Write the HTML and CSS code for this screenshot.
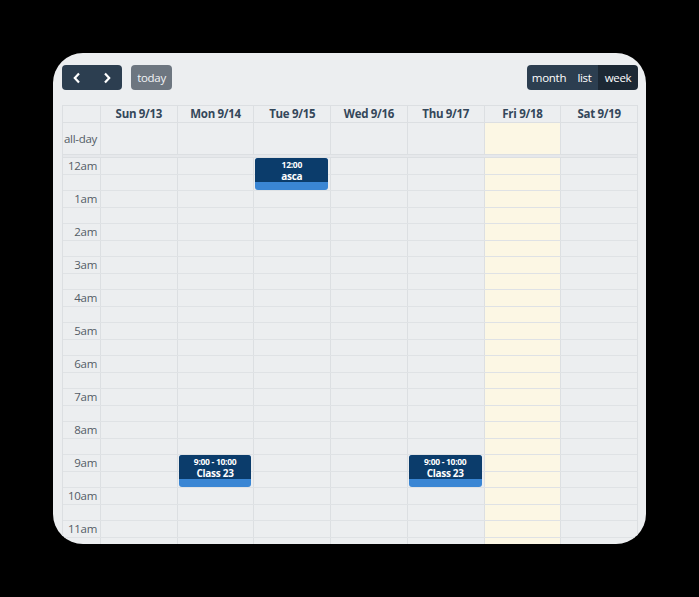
FILE: index.html
```html
<!DOCTYPE html>
<html>
<head>
<meta charset="utf-8">
<link rel="stylesheet" href="styles.css">
</head>
<body>
<div class="card">
  <div class="toolbar">
    <div class="tb-left">
      <div class="btn-group">
        <button class="btn nav"><svg width="10" height="12" viewBox="0 0 10 12"><path d="M7 1.5 L2.8 6 L7 10.5" fill="none" stroke="#fff" stroke-width="2.2"/></svg></button>
        <button class="btn nav"><svg width="10" height="12" viewBox="0 0 10 12"><path d="M3 1.5 L7.2 6 L3 10.5" fill="none" stroke="#fff" stroke-width="2.2"/></svg></button>
      </div>
      <button class="btn today">today</button>
    </div>
    <div class="btn-group">
      <button class="btn view">month</button><button class="btn view">list</button><button class="btn view active">week</button>
    </div>
  </div>

  <div class="cal">
    <div class="row7 head">
      <div class="axis"></div>
      <div class="hcell">Sun 9/13</div>
      <div class="hcell">Mon 9/14</div>
      <div class="hcell">Tue 9/15</div>
      <div class="hcell">Wed 9/16</div>
      <div class="hcell">Thu 9/17</div>
      <div class="hcell">Fri 9/18</div>
      <div class="hcell">Sat 9/19</div>
    </div>
    <div class="row7 allday">
      <div class="axis alabel">all-day</div>
      <div class="acell"></div>
      <div class="acell"></div>
      <div class="acell"></div>
      <div class="acell"></div>
      <div class="acell"></div>
      <div class="acell today-col"></div>
      <div class="acell"></div>
    </div>
    <div class="divider"></div>
    <div class="tbody">
      <div class="row7 layer bg">
        <div class="bcol"></div>
        <div class="bcol"></div>
        <div class="bcol"></div>
        <div class="bcol"></div>
        <div class="bcol"></div>
        <div class="bcol"></div>
        <div class="bcol today-col"></div>
        <div class="bcol"></div>
      </div>
      <div class="slots">
        <div class="slot"><span class="tl">12am</span></div><div class="slot minor"></div>
        <div class="slot"><span class="tl">1am</span></div><div class="slot minor"></div>
        <div class="slot"><span class="tl">2am</span></div><div class="slot minor"></div>
        <div class="slot"><span class="tl">3am</span></div><div class="slot minor"></div>
        <div class="slot"><span class="tl">4am</span></div><div class="slot minor"></div>
        <div class="slot"><span class="tl">5am</span></div><div class="slot minor"></div>
        <div class="slot"><span class="tl">6am</span></div><div class="slot minor"></div>
        <div class="slot"><span class="tl">7am</span></div><div class="slot minor"></div>
        <div class="slot"><span class="tl">8am</span></div><div class="slot minor"></div>
        <div class="slot"><span class="tl">9am</span></div><div class="slot minor"></div>
        <div class="slot"><span class="tl">10am</span></div><div class="slot minor"></div>
        <div class="slot"><span class="tl">11am</span></div><div class="slot minor"></div>
      </div>
      <div class="row7 layer evs">
        <div></div>
        <div class="ecol"></div>
        <div class="ecol">
          <div class="event at9"><div class="ev-main"><div class="ev-time">9:00 - 10:00</div><div class="ev-title">Class 23</div></div></div>
        </div>
        <div class="ecol">
          <div class="event at0"><div class="ev-main"><div class="ev-time">12:00</div><div class="ev-title">asca</div></div></div>
        </div>
        <div class="ecol"></div>
        <div class="ecol">
          <div class="event at9"><div class="ev-main"><div class="ev-time">9:00 - 10:00</div><div class="ev-title">Class 23</div></div></div>
        </div>
        <div class="ecol"></div>
        <div class="ecol"></div>
      </div>
    </div>
  </div>
</div>
</body>
</html>
```

FILE: styles.css
```css
* { box-sizing: border-box; }
html, body {
  margin: 0;
  padding: 0;
  background: #000;
}
body {
  font-family: "Open Sans", "Noto Sans", sans-serif;
  font-size: 12px;
}
.card {
  margin: 53px 0 0 53px;
  width: 593px;
  height: 491px;
  border-radius: 30px;
  overflow: hidden;
  background: #eceef0;
  padding: 12px 8px 0 9px;
}
.toolbar {
  display: flex;
  justify-content: space-between;
  align-items: center;
  height: 25px;
}
.tb-left {
  display: flex;
  gap: 9px;
}
.btn-group {
  display: flex;
  border-radius: 4px;
  overflow: hidden;
  height: 25px;
}
.btn {
  border: 0;
  margin: 0;
  padding: 0;
  height: 25px;
  font-family: inherit;
  font-size: 11.5px;
  color: #fff;
  background: #2c3e50;
  display: flex;
  align-items: center;
  justify-content: center;
  letter-spacing: -0.3px;
}
.nav { width: 30px; }
.today {
  width: 41px;
  border-radius: 4px;
  background: #6d7680;
  color: #f2f4f6;
}
.view.btn:nth-child(1) { width: 44px; }
.view.btn:nth-child(2) { width: 27px; }
.view.btn:nth-child(3) { width: 40px; }
.view.active { background: #1c2834; }

.cal {
  margin-top: 15px;
  border-left: 1px solid #dcdfe2;
  border-right: 1px solid #dcdfe2;
  border-top: 1px solid #dcdfe2;
}
.row7 {
  display: grid;
  grid-template-columns: 37px repeat(7, 1fr);
}
.head {
  height: 17px;
  border-bottom: 1px solid #dcdfe2;
}
.hcell {
  border-left: 1px solid #dcdfe2;
  text-align: center;
  font-weight: 700;
  color: #34475a;
  font-size: 11.5px;
  line-height: 16px;
  letter-spacing: -0.3px;
}
.allday {
  height: 32px;
  border-bottom: 1px solid #dcdfe2;
}
.alabel {
  text-align: right;
  padding-right: 3px;
  line-height: 31px;
  color: #535c66;
  font-size: 11.5px;
  letter-spacing: -0.3px;
}
.acell {
  border-left: 1px solid #dcdfe2;
}
.today-col { background: #fcf7e4; }
.divider {
  height: 3px;
  background: #e6e8eb;
  border-bottom: 1px solid #dcdfe2;
}
.tbody {
  position: relative;
}
.layer {
  position: absolute;
  inset: 0;
}
.bg { z-index: 0; }
.bcol { border-left: 1px solid #dcdfe2; }
.bcol:first-child { border-left: 0; }
.slots {
  position: relative;
  z-index: 1;
}
.slot {
  height: 16.5px;
  border-bottom: 1px solid #dfe2e5;
  position: relative;
}
.tl {
  display: block;
  width: 37px;
  text-align: right;
  padding-right: 3px;
  line-height: 16px;
  color: #535c66;
  font-size: 11.5px;
  letter-spacing: -0.3px;
}
.evs { z-index: 2; }
.ecol { position: relative; }
.event {
  position: absolute;
  left: 2px;
  right: 2px;
  height: 32px;
  background: #3a86d4;
  border-radius: 3px;
  overflow: hidden;
  color: #fff;
  text-align: center;
  font-weight: 700;
}
.at0 { top: 0; }
.at9 { top: 297px; }
.ev-main {
  height: 24px;
  background: #0b3c6b;
  padding-top: 2px;
}
.ev-time {
  font-size: 8.5px;
  line-height: 10px;
  letter-spacing: -0.3px;
}
.ev-title {
  font-size: 10px;
  line-height: 12px;
  letter-spacing: -0.3px;
}
```
